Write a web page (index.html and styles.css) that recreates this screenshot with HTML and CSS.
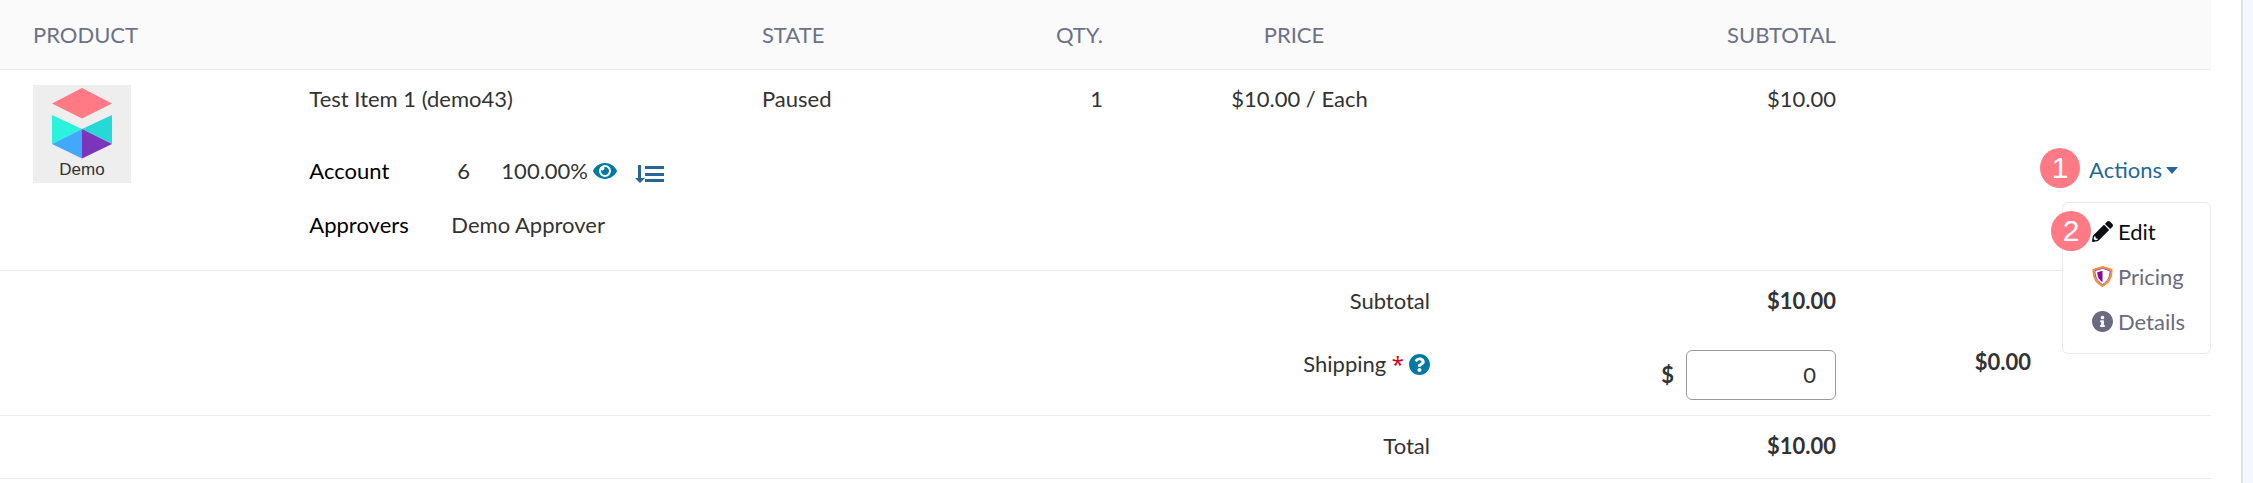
FILE: index.html
```html
<!DOCTYPE html>
<html lang="en">
<head>
<meta charset="utf-8">
<title>Order items</title>
<link rel="stylesheet" href="styles.css">
</head>
<body>
<main class="panel">
  <table class="items">
    <colgroup>
      <col class="col-product"><col class="col-item"><col class="col-state"><col class="col-qty"><col class="col-price"><col class="col-subtotal"><col class="col-actions">
    </colgroup>
    <thead>
      <tr>
        <th scope="col" colspan="2">PRODUCT</th>
        <th scope="col">STATE</th>
        <th scope="col" class="right">QTY.</th>
        <th scope="col" class="price">PRICE</th>
        <th scope="col" class="right">SUBTOTAL</th>
        <td></td>
      </tr>
    </thead>
    <tbody>
      <tr class="item-row ruled">
        <td>
          <svg class="thumb" viewBox="0 0 98 98" role="img" aria-label="Demo">
            <rect width="98" height="98" fill="#eee"/>
            <path fill="#ff7a85" d="M49 3 79 18.500 49 33.500 19 18.500z"/>
            <path fill="#2bf2dc" d="M19 30 49 44 19 59z"/>
            <path fill="#25d9d6" d="M79 30 49 44 79 59z"/>
            <path fill="#40a9fb" d="M49 44V73.500L19 59z"/>
            <path fill="#7b35ba" d="M49 44V73.500L79 59z"/>
            <text x="49" y="90" text-anchor="middle" class="thumb-text">Demo</text>
          </svg>
        </td>
        <td>
          <div>Test Item 1 (demo43)</div>
          <dl class="details">
            <dt>Account</dt>
            <dd class="account">
              <span class="account-id">6</span>
              <span class="share">100.00%</span>
              <button class="icon-btn eye" type="button" aria-label="View account">
                <svg viewBox="0 0 576 512" width="24" height="22"><path fill="currentColor" d="M572.52 241.4C518.29 135.59 410.93 64 288 64S57.680 135.640 3.480 241.410a32.350 32.350 0 0 0 0 29.190C57.710 376.410 165.070 448 288 448s230.320-71.640 284.520-177.410a32.350 32.350 0 0 0 0-29.190zM288 400a144 144 0 1 1 144-144 143.930 143.930 0 0 1-144 144zm0-240a95.310 95.310 0 0 0-25.310 3.790 47.850 47.850 0 0 1-66.900 66.900A95.780 95.780 0 1 0 288 160z"/></svg>
              </button>
              <button class="icon-btn order" type="button" aria-label="Account order">
                <svg viewBox="0 0 30 20" width="30" height="20"><path fill="currentColor" d="M3 1h3v13h4L5 19 0 14h3zM10 2h19v3H10zM10 9h19v3H10zM10 15h19v3H10z"/></svg>
              </button>
            </dd>
            <dt>Approvers</dt>
            <dd>Demo Approver</dd>
          </dl>
        </td>
        <td>Paused</td>
        <td class="right">1</td>
        <td class="center">$10.00 / Each</td>
        <td class="right">$10.00</td>
        <td class="actions-cell">
          <div class="actions">
            <button class="actions-btn" type="button" aria-expanded="true">Actions<span class="caret"></span></button>
            <span class="badge badge-one">1</span>
            <ul class="menu">
              <li><a class="current" href="#edit"><svg viewBox="0 0 512 512"><path fill="currentColor" d="M497.900 142.100l-46.100 46.100c-4.700 4.700-12.300 4.700-17 0l-111-111c-4.700-4.700-4.700-12.300 0-17l46.100-46.100c18.700-18.700 49.100-18.700 67.900 0l60.100 60.100c18.800 18.700 18.800 49.100 0 67.900zM284.200 99.800L21.600 362.400.4 483.900c-2.900 16.400 11.400 30.600 27.800 27.800l121.500-21.300 262.600-262.600c4.700-4.700 4.700-12.300 0-17l-111-111c-4.800-4.700-12.400-4.700-17.100 0z"/><path fill="#fff" d="M88 376v48h48v36l-60 12-36-36 12-60z"/></svg>Edit</a></li>
              <li><a href="#pricing"><svg viewBox="0 0 22 22"><path fill="#fff" stroke="#f0962a" stroke-width="2" d="M11 1 20.500 4C21 12 18 17.500 11 21 4 17.500 1 12 1.500 4z"/><path fill="none" stroke="#b02a9a" stroke-width="1" d="M11 2.500 19 5c0 6.500-2.500 11-8 14.500C5.500 16 3 11.500 3 5z"/><path fill="#8a0a96" d="M11 5v12C7.500 14.500 5.500 11.500 5.500 6.500z"/></svg>Pricing</a></li>
              <li><a href="#details"><svg viewBox="8 8 496 496"><path fill="currentColor" d="M256 8C119.043 8 8 119.083 8 256c0 136.997 111.043 248 248 248s248-111.003 248-248C504 119.083 392.957 8 256 8zm0 110c23.196 0 42 18.804 42 42s-18.804 42-42 42-42-18.804-42-42 18.804-42 42-42zm56 254c0 6.627-5.373 12-12 12h-88c-6.627 0-12-5.373-12-12v-24c0-6.627 5.373-12 12-12h12v-64h-12c-6.627 0-12-5.373-12-12v-24c0-6.627 5.373-12 12-12h64c6.627 0 12 5.373 12 12v100h12c6.627 0 12 5.373 12 12v24z"/></svg>Details</a></li>
            </ul>
            <span class="badge badge-two">2</span>
          </div>
        </td>
      </tr>
      <tr class="subtotal-row">
        <td class="right" colspan="5">Subtotal</td>
        <td class="right strong">$10.00</td>
        <td></td>
      </tr>
      <tr class="ruled">
        <td class="right" colspan="5">
          <div class="shipping-label">
            <label for="shipping">Shipping <span class="required">*</span></label>
            <button class="icon-btn" type="button" aria-label="Shipping help"><svg viewBox="8 8 496 496" width="21" height="21"><path fill="currentColor" d="M504 256c0 136.997-111.043 248-248 248S8 392.997 8 256C8 119.083 119.043 8 256 8s248 111.083 248 248zM262.655 90c-54.497 0-89.255 22.957-116.549 63.758-3.536 5.286-2.353 12.415 2.715 16.258l34.699 26.310c5.205 3.947 12.621 3.008 16.665-2.122 17.864-22.658 30.113-35.797 57.303-35.797 20.429 0 45.698 13.148 45.698 32.958 0 14.976-12.363 22.667-32.534 33.976C247.128 238.528 216 254.941 216 296v4c0 6.627 5.373 12 12 12h56c6.627 0 12-5.373 12-12v-1.333c0-28.462 83.186-29.647 83.186-106.667 0-58.002-60.165-102-116.531-102zM256 338c-25.365 0-46 20.635-46 46 0 25.364 20.635 46 46 46s46-20.636 46-46c0-25.365-20.635-46-46-46z"/></svg></button>
          </div>
        </td>
        <td>
          <div class="money"><span class="strong">$</span><input id="shipping" type="text" value="0"></div>
        </td>
        <td class="shipping-total strong">$0.00</td>
      </tr>
      <tr class="total-row ruled">
        <td class="right" colspan="5">Total</td>
        <td class="right strong">$10.00</td>
        <td></td>
      </tr>
    </tbody>
  </table>
</main>
</body>
</html>
```
FILE: styles.css
```css
* { box-sizing: border-box; }

body {
  margin: 0;
  background: #f4f8fc;
  color: #333;
  font: 22px/30px Lato, "Noto Sans", sans-serif;
}

button, input { font: inherit; }

.panel {
  min-height: 100vh;
  margin-right: 10px;
  padding-right: 30px;
  background: #fff;
  border-right: 2px solid #dde2e7;
}

.items {
  width: 100%;
  table-layout: fixed;
  border-collapse: separate;
  border-spacing: 0;
}

.col-product { width: 12.5%; }
.col-item { width: 20.47%; }
.col-state { width: 12.26%; }
.col-qty { width: 6.15%; }
.col-price { width: 14.79%; }
.col-subtotal { width: 18.36%; }
.col-actions { width: 15.47%; }

.items th, .items td {
  padding: 14px 33px;
  vertical-align: top;
  text-align: left;
  white-space: nowrap;
}

.items thead th, .items thead td {
  padding-top: 20px;
  padding-bottom: 19px;
  background: #fafafa;
  border-bottom: 1px solid #ebebeb;
  color: #6b7288;
  font-weight: 400;
}

.items .right { text-align: right; }
.items .center { text-align: center; }
.items thead .price { padding-right: 44px; text-align: center; }
.ruled td { border-bottom: 1px solid #ebebeb; }
.items .strong, .strong { font-weight: 700; }

.item-row { height: 201px; }
.subtotal-row { height: 64px; }
.subtotal-row td, .total-row td { padding-top: 15px; }
.total-row { height: 63px; }

.thumb {
  display: block;
  width: 98px;
  height: 98px;
  margin-top: 1px;
}
.thumb-text { font: 17px "Liberation Sans", Arial, sans-serif; fill: #333; }

.details {
  display: grid;
  grid-template-columns: 142px 1fr;
  row-gap: 24px;
  margin: 42px 0 0;
}
.details dt { color: #000; }
.details dd { margin: 0; }

.account { display: flex; align-items: center; }
.account-id { width: 50px; padding-left: 6px; }
.share { margin-right: 5px; }

.icon-btn {
  display: inline-flex;
  padding: 0;
  border: 0;
  background: none;
  color: #0479a1;
}
.order { margin: 6px 0 0 18px; color: #2a6496; }

.items .actions-cell { vertical-align: middle; }
.actions { position: relative; text-align: right; }
.actions-btn {
  display: inline-flex;
  align-items: center;
  gap: 4px;
  padding: 0;
  border: 0;
  background: none;
  color: #23679b;
}
.caret {
  border: 6px solid transparent;
  border-top: 7px solid currentColor;
  border-bottom: 0;
}

.menu {
  position: absolute;
  top: 47px;
  right: -33px;
  width: 149px;
  margin: 0;
  padding: 6px 0 9px;
  list-style: none;
  background: #fff;
  border: 1px solid #ebebeb;
  border-radius: 6px;
}
.menu a {
  display: flex;
  align-items: center;
  gap: 5px;
  height: 45px;
  padding-left: 29px;
  color: #6b6b80;
  text-decoration: none;
}
.menu a.current { color: #0c0c14; }
.menu svg { width: 21px; height: 21px; }

.badge {
  position: absolute;
  width: 40px;
  height: 40px;
  border-radius: 50%;
  background: #ff7a85;
  color: #fff;
  font: 30px/40px "Liberation Sans", Arial, sans-serif;
  text-align: center;
}
.badge-one { top: -7px; right: 98px; }
.badge-two { top: 56px; right: 87px; }

.shipping-label {
  display: flex;
  align-items: center;
  justify-content: flex-end;
  gap: 5px;
}
.required { color: #d0021b; font-family: "Noto Sans", sans-serif; line-height: 1; }

.items td:has(.money) { padding-top: 15px; padding-bottom: 15px; }
.money {
  display: flex;
  align-items: center;
  justify-content: flex-end;
  gap: 12px;
}
.money input {
  width: 150px;
  height: 50px;
  padding: 0 19px 2px;
  border: 1px solid #999;
  border-radius: 6px;
  background: #fff;
  color: #333;
  text-align: right;
}
.items .shipping-total { padding: 12px 180px 0 0; text-align: right; }
```
